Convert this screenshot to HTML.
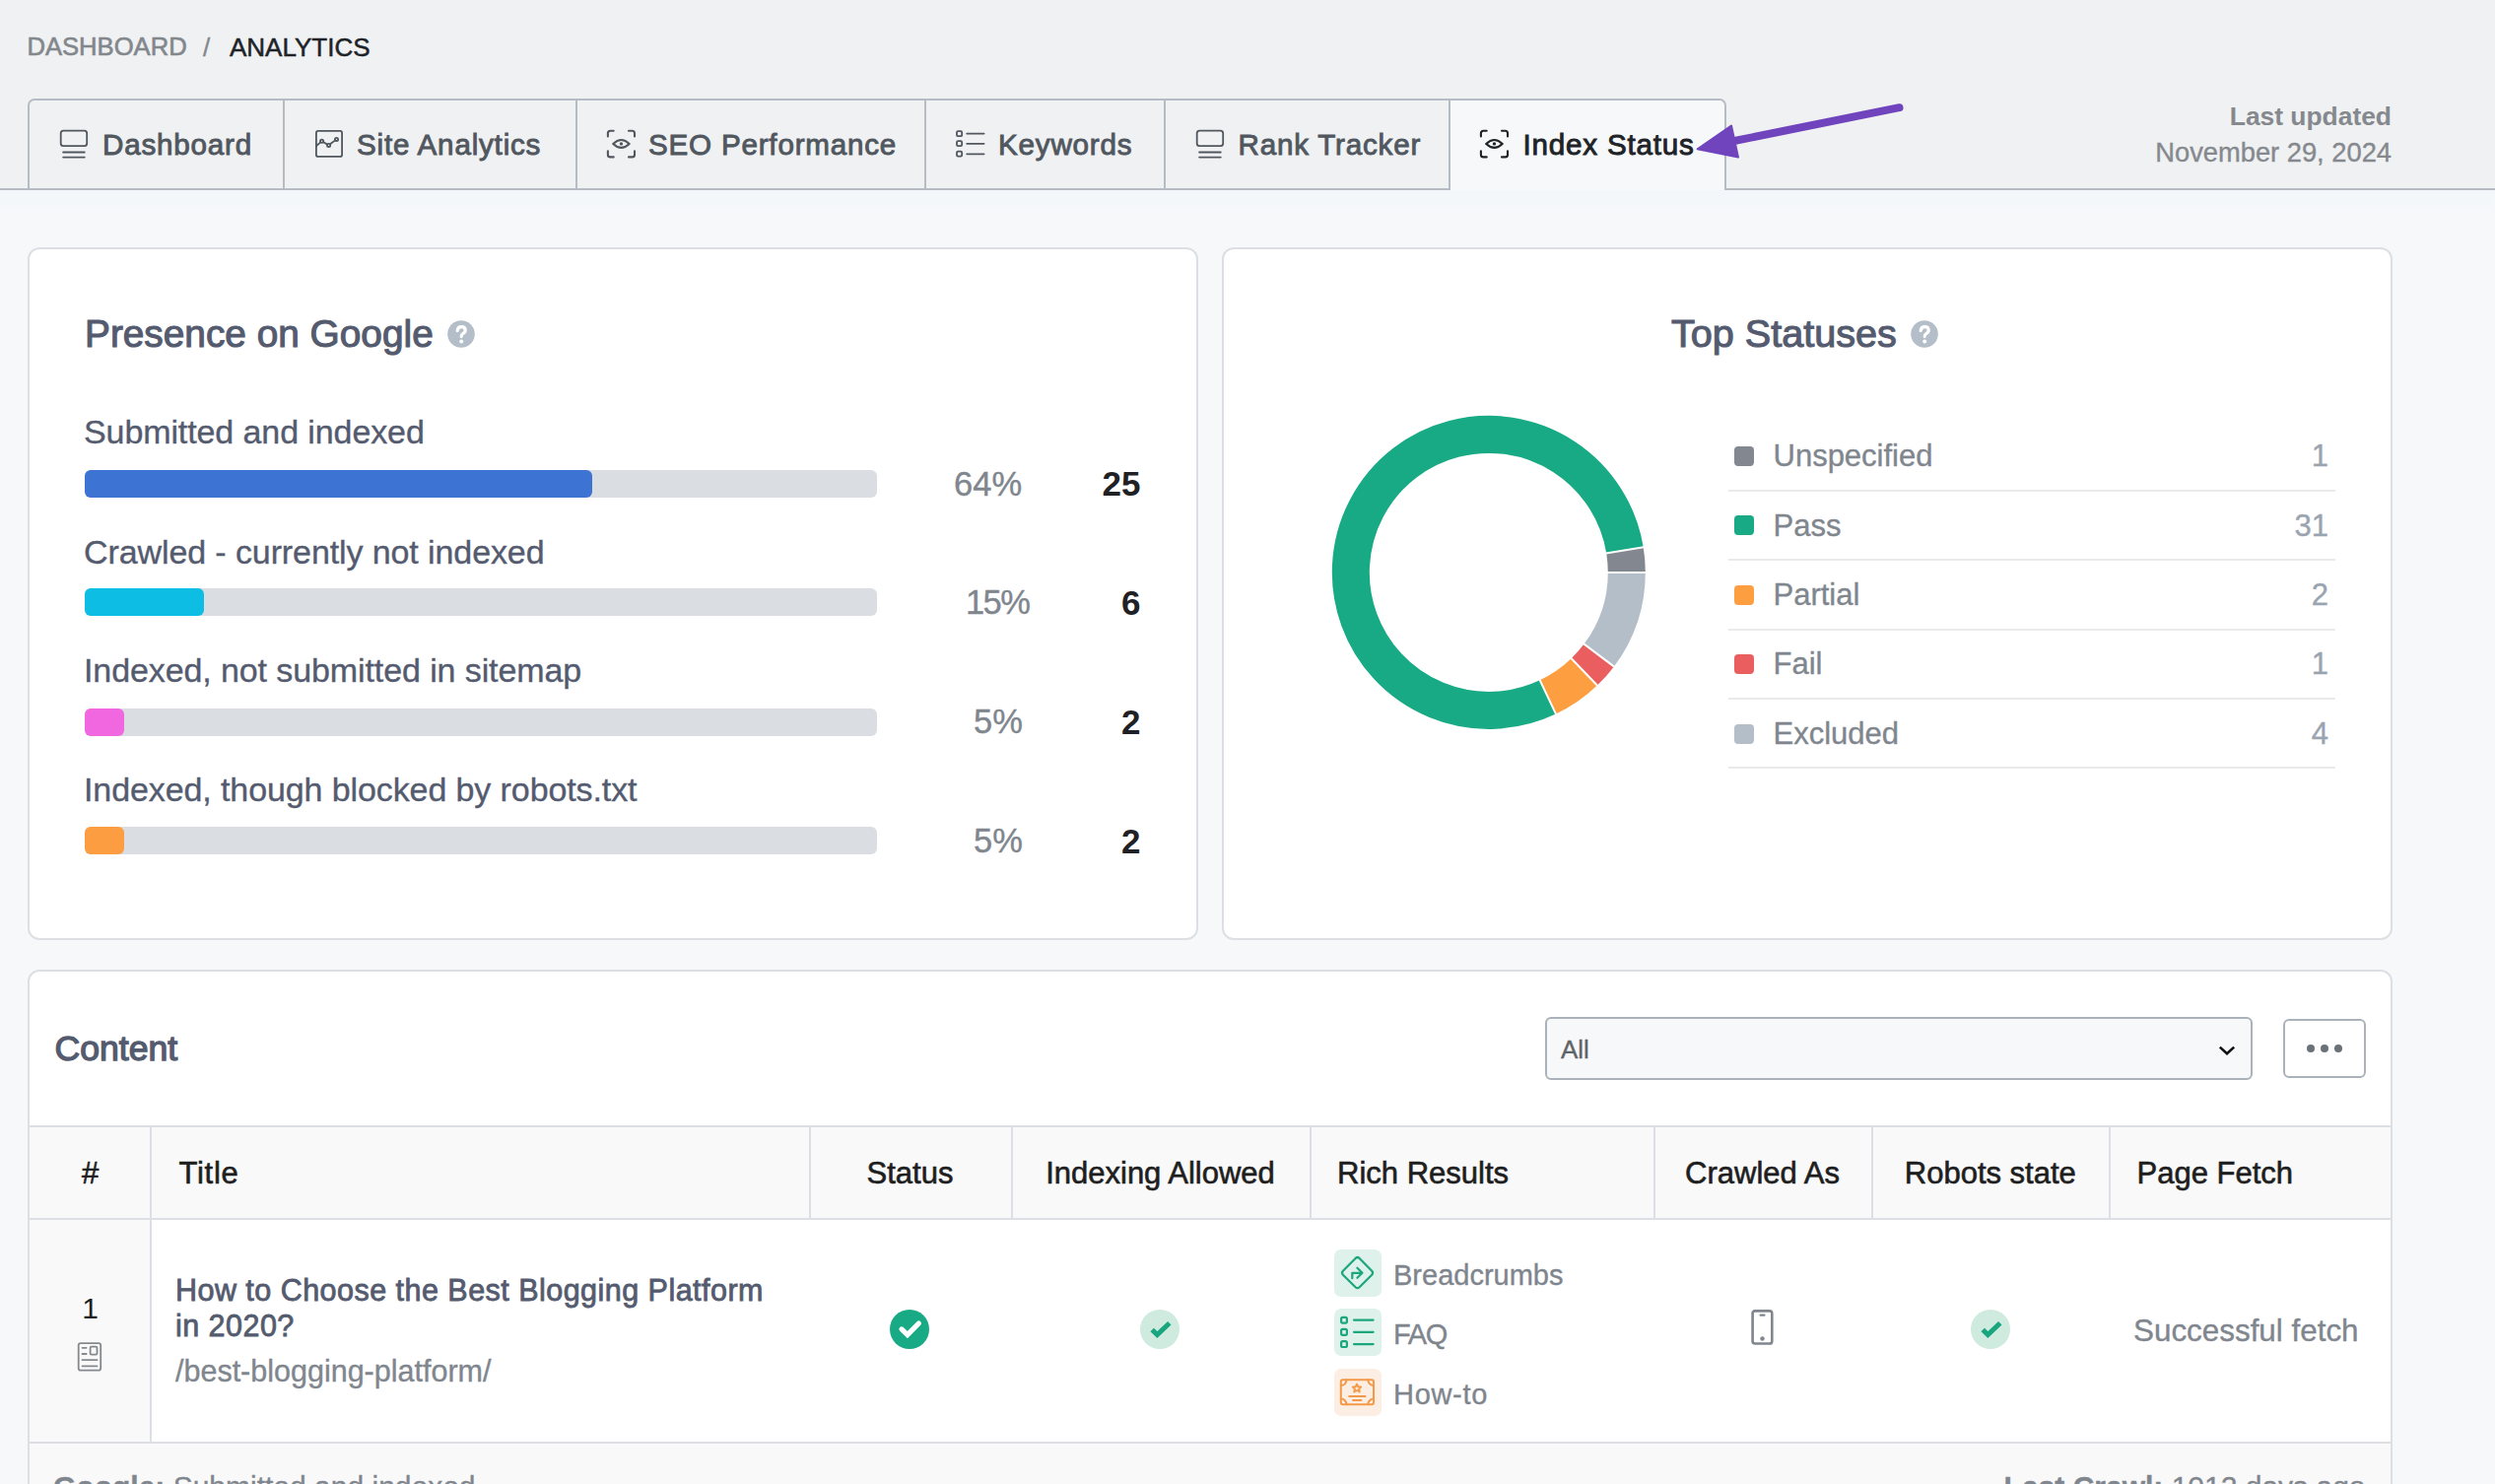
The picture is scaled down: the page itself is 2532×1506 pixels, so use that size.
<!DOCTYPE html>
<html><head><meta charset="utf-8"><title>Index Status</title>
<style>
html,body{margin:0;padding:0;width:2532px;height:1506px;overflow:hidden;background:#f7f8fa}
body{position:relative;font-family:"Liberation Sans",sans-serif}
.a{position:absolute;display:block}
.t{position:absolute;white-space:pre;font-family:"Liberation Sans",sans-serif}
</style></head><body>
<div class="a" style="left:0px;top:0px;width:2532px;height:192px;background:#f0f1f3"></div>
<div class="a" style="left:0px;top:192px;width:2532px;height:1314px;background:#f7f8fa"></div>
<div class="a" style="left:0px;top:193px;width:2532px;height:36px;background:linear-gradient(#f3f7fa,#f7f8fa)"></div>
<div class="t" style="left:27.5px;top:35.3px;font-size:25.6px;line-height:25.6px;font-weight:400;color:#82878c;-webkit-text-stroke:0.6px #82878c;">DASHBOARD</div>
<div class="t" style="left:206.0px;top:35.0px;font-size:26px;line-height:26px;font-weight:400;color:#82878c;-webkit-text-stroke:0.35px #82878c;">/</div>
<div class="t" style="left:233.0px;top:35.0px;font-size:26px;line-height:26px;font-weight:400;color:#1d2327;-webkit-text-stroke:0.5px #1d2327;">ANALYTICS</div>
<div class="a" style="left:1472px;top:102px;width:279px;height:91px;background:#f7f8fa"></div>
<div class="a" style="left:28px;top:100px;width:1724px;height:93px;box-sizing:border-box;border:2px solid #b5bcc3;border-bottom:none;border-radius:7px 7px 0 0"></div>
<div class="a" style="left:287px;top:101px;width:2px;height:92px;background:#b5bcc3"></div>
<div class="a" style="left:584px;top:101px;width:2px;height:92px;background:#b5bcc3"></div>
<div class="a" style="left:938px;top:101px;width:2px;height:92px;background:#b5bcc3"></div>
<div class="a" style="left:1181px;top:101px;width:2px;height:92px;background:#b5bcc3"></div>
<div class="a" style="left:1470px;top:101px;width:2px;height:92px;background:#b5bcc3"></div>
<div class="a" style="left:0px;top:191px;width:1472px;height:2px;background:#b5bcc3"></div>
<div class="a" style="left:1751px;top:191px;width:781px;height:2px;background:#b5bcc3"></div>
<svg class="a" style="left:55px;top:125px;" width="40" height="40" viewBox="0 0 40 40"><rect x="6.7" y="7.6" width="26.5" height="15.6" rx="2.6" stroke="#50575e" stroke-width="1.8" fill="none" stroke-linecap="round" stroke-linejoin="round"/><path d="M9.1 29.5H30.8M9.1 34.6H30.8" stroke="#50575e" stroke-width="1.8" fill="none" stroke-linecap="round" stroke-linejoin="round"/></svg>
<div class="t" style="left:104.0px;top:131.5px;font-size:29.6px;line-height:29.6px;font-weight:400;color:#50575e;letter-spacing:0.8px;-webkit-text-stroke:0.9px #50575e;">Dashboard</div>
<svg class="a" style="left:315px;top:125px;" width="40" height="40" viewBox="0 0 40 40"><rect x="5.9" y="7.9" width="26.2" height="26" rx="2" stroke="#50575e" stroke-width="1.8" fill="none" stroke-linecap="round" stroke-linejoin="round"/><path d="M5.8 23.2L10 19.6M13.2 19.3L16.9 21.4M20.3 21L24.9 17.6" stroke="#50575e" stroke-width="1.8" fill="none" stroke-linecap="round" stroke-linejoin="round"/><circle cx="11.6" cy="18.3" r="1.6" stroke="#50575e" stroke-width="1.8" fill="none" stroke-linecap="round" stroke-linejoin="round"/><circle cx="18.6" cy="22.4" r="1.6" stroke="#50575e" stroke-width="1.8" fill="none" stroke-linecap="round" stroke-linejoin="round"/><circle cx="26.5" cy="16.4" r="1.6" stroke="#50575e" stroke-width="1.8" fill="none" stroke-linecap="round" stroke-linejoin="round"/></svg>
<div class="t" style="left:362.0px;top:131.5px;font-size:29.6px;line-height:29.6px;font-weight:400;color:#50575e;letter-spacing:0.8px;-webkit-text-stroke:0.9px #50575e;">Site Analytics</div>
<svg class="a" style="left:610px;top:125px;" width="40" height="40" viewBox="0 0 40 40"><path d="M6.9 13.5V10.3A2.5 2.5 0 0 1 9.4 7.8H12.7M28 7.8H31.5A2.5 2.5 0 0 1 34 10.3V13.5M6.9 28.3V31.9A2.5 2.5 0 0 0 9.4 34.4H12.7M28 34.4H31.5A2.5 2.5 0 0 0 34 31.9V28.3" stroke="#50575e" stroke-width="2.1" fill="none" stroke-linecap="round" stroke-linejoin="round"/><path d="M12.2 20.9Q20.45 13.1 28.7 20.9Q20.45 28.7 12.2 20.9Z" stroke="#50575e" stroke-width="2.1" fill="none" stroke-linecap="round" stroke-linejoin="round"/><circle cx="20.45" cy="20.9" r="1.7" fill="#50575e"/></svg>
<div class="t" style="left:658.0px;top:131.5px;font-size:29.6px;line-height:29.6px;font-weight:400;color:#50575e;letter-spacing:0.8px;-webkit-text-stroke:0.9px #50575e;">SEO Performance</div>
<svg class="a" style="left:965px;top:125px;" width="40" height="40" viewBox="0 0 40 40"><rect x="6" y="8.2" width="5.2" height="5" rx="1.3" stroke="#50575e" stroke-width="1.8" fill="none" stroke-linecap="round" stroke-linejoin="round"/><rect x="6" y="18.1" width="5.2" height="5" rx="1.3" stroke="#50575e" stroke-width="1.8" fill="none" stroke-linecap="round" stroke-linejoin="round"/><rect x="6" y="28.6" width="5.2" height="5" rx="1.3" stroke="#50575e" stroke-width="1.8" fill="none" stroke-linecap="round" stroke-linejoin="round"/><path d="M16.2 10.6H33.6M16.2 20.8H33.6M16.2 31.3H33.6" stroke="#50575e" stroke-width="1.8" fill="none" stroke-linecap="round" stroke-linejoin="round"/></svg>
<div class="t" style="left:1013.0px;top:131.5px;font-size:29.6px;line-height:29.6px;font-weight:400;color:#50575e;letter-spacing:0.8px;-webkit-text-stroke:0.9px #50575e;">Keywords</div>
<svg class="a" style="left:1208px;top:125px;" width="40" height="40" viewBox="0 0 40 40"><rect x="6.7" y="7.6" width="26.5" height="15.6" rx="2.6" stroke="#50575e" stroke-width="1.8" fill="none" stroke-linecap="round" stroke-linejoin="round"/><path d="M9.1 29.5H30.8M9.1 34.6H30.8" stroke="#50575e" stroke-width="1.8" fill="none" stroke-linecap="round" stroke-linejoin="round"/></svg>
<div class="t" style="left:1256.5px;top:131.5px;font-size:29.6px;line-height:29.6px;font-weight:400;color:#50575e;letter-spacing:0.8px;-webkit-text-stroke:0.9px #50575e;">Rank Tracker</div>
<svg class="a" style="left:1496px;top:125px;" width="40" height="40" viewBox="0 0 40 40"><path d="M6.9 13.5V10.3A2.5 2.5 0 0 1 9.4 7.8H12.7M28 7.8H31.5A2.5 2.5 0 0 1 34 10.3V13.5M6.9 28.3V31.9A2.5 2.5 0 0 0 9.4 34.4H12.7M28 34.4H31.5A2.5 2.5 0 0 0 34 31.9V28.3" stroke="#1d2327" stroke-width="2.1" fill="none" stroke-linecap="round" stroke-linejoin="round"/><path d="M12.2 20.9Q20.45 13.1 28.7 20.9Q20.45 28.7 12.2 20.9Z" stroke="#1d2327" stroke-width="2.1" fill="none" stroke-linecap="round" stroke-linejoin="round"/><circle cx="20.45" cy="20.9" r="1.7" fill="#1d2327"/></svg>
<div class="t" style="left:1545.5px;top:131.5px;font-size:29.6px;line-height:29.6px;font-weight:400;color:#1d2327;letter-spacing:0.8px;-webkit-text-stroke:0.9px #1d2327;">Index Status</div>
<svg class="a" style="left:1700px;top:95px;" width="240" height="80" viewBox="0 0 240 80"><path d="M227.5 14.2L55 49" stroke="#6f44bd" stroke-width="8" stroke-linecap="round"/><path d="M22.6 56.2L57 32.5L64 64.6Z" fill="#6f44bd" stroke="#6f44bd" stroke-width="2" stroke-linejoin="round"/></svg>
<div class="t" style="right:105.0px;top:105.4px;font-size:26.4px;line-height:26.4px;font-weight:700;color:#85898e;text-align:right;">Last updated</div>
<div class="t" style="right:105.0px;top:140.7px;font-size:27.3px;line-height:27.3px;font-weight:400;color:#85898e;text-align:right;-webkit-text-stroke:0.35px #85898e;">November 29, 2024</div>
<div class="a" style="left:28px;top:251px;width:1188px;height:703px;box-sizing:border-box;border:2px solid #dcdfe3;border-radius:12px;background:#fff"></div>
<div class="a" style="left:1240px;top:251px;width:1188px;height:703px;box-sizing:border-box;border:2px solid #dcdfe3;border-radius:12px;background:#fff"></div>
<div class="a" style="left:28px;top:984px;width:2400px;height:700px;box-sizing:border-box;border:2px solid #dcdfe3;border-radius:12px;background:#fff"></div>
<div class="t" style="left:86.0px;top:320.2px;font-size:38.8px;line-height:38.8px;font-weight:400;color:#545b6f;-webkit-text-stroke:1.1px #545b6f;">Presence on Google</div>
<svg class="a" style="left:454px;top:325px;" width="28" height="28" viewBox="0 0 28 28"><circle cx="14" cy="14" r="13.8" fill="#b4bec9"/><path d="M10.2 10.6Q10.6 6.6 14.3 6.6Q18.2 6.6 18.2 10.2Q18.2 12.3 15.8 13.6Q14.2 14.5 14.2 16.6" stroke="#fff" stroke-width="3.2" fill="none" stroke-linecap="round"/><circle cx="14.2" cy="21.4" r="2" fill="#fff"/></svg>
<div class="t" style="left:1696.0px;top:319.2px;font-size:39.6px;line-height:39.6px;font-weight:400;color:#545b6f;-webkit-text-stroke:1.1px #545b6f;">Top Statuses</div>
<svg class="a" style="left:1938.5px;top:325.2px;" width="28" height="28" viewBox="0 0 28 28"><circle cx="14" cy="14" r="13.8" fill="#b4bec9"/><path d="M10.2 10.6Q10.6 6.6 14.3 6.6Q18.2 6.6 18.2 10.2Q18.2 12.3 15.8 13.6Q14.2 14.5 14.2 16.6" stroke="#fff" stroke-width="3.2" fill="none" stroke-linecap="round"/><circle cx="14.2" cy="21.4" r="2" fill="#fff"/></svg>
<div class="t" style="left:85.0px;top:421.2px;font-size:34px;line-height:34px;font-weight:400;color:#545b6f;letter-spacing:-0.1px;-webkit-text-stroke:0.35px #545b6f;">Submitted and indexed</div>
<div class="a" style="left:86px;top:477px;width:804px;height:28px;background:#dadee2;border-radius:6px"></div>
<div class="a" style="left:86px;top:477px;width:515px;height:28px;background:#3d74d4;border-radius:6px"></div>
<div class="t" style="left:968.1px;top:473.8px;font-size:34.5px;line-height:34.5px;font-weight:400;color:#80868e;-webkit-text-stroke:0.35px #80868e;">64%</div>
<div class="t" style="right:1374.5px;top:473.4px;font-size:35px;line-height:35px;font-weight:700;color:#1f2124;text-align:right;">25</div>
<div class="t" style="left:85.0px;top:542.6px;font-size:34px;line-height:34px;font-weight:400;color:#545b6f;letter-spacing:-0.1px;-webkit-text-stroke:0.35px #545b6f;">Crawled - currently not indexed</div>
<div class="a" style="left:86px;top:597.4px;width:804px;height:28px;background:#dadee2;border-radius:6px"></div>
<div class="a" style="left:86px;top:597.4px;width:120.7px;height:28px;background:#0ebde4;border-radius:6px"></div>
<div class="t" style="left:980.0px;top:594.2px;font-size:34.5px;line-height:34.5px;font-weight:400;color:#80868e;letter-spacing:-1.6px;-webkit-text-stroke:0.35px #80868e;">15%</div>
<div class="t" style="right:1374.5px;top:593.8px;font-size:35px;line-height:35px;font-weight:700;color:#1f2124;text-align:right;">6</div>
<div class="t" style="left:85.0px;top:662.7px;font-size:34px;line-height:34px;font-weight:400;color:#545b6f;letter-spacing:-0.1px;-webkit-text-stroke:0.35px #545b6f;">Indexed, not submitted in sitemap</div>
<div class="a" style="left:86px;top:718.5px;width:804px;height:28px;background:#dadee2;border-radius:6px"></div>
<div class="a" style="left:86px;top:718.5px;width:40px;height:28px;background:#f067e0;border-radius:6px"></div>
<div class="t" style="left:988.0px;top:715.3px;font-size:34.5px;line-height:34.5px;font-weight:400;color:#80868e;-webkit-text-stroke:0.35px #80868e;">5%</div>
<div class="t" style="right:1374.5px;top:714.9px;font-size:35px;line-height:35px;font-weight:700;color:#1f2124;text-align:right;">2</div>
<div class="t" style="left:85.0px;top:783.8px;font-size:34px;line-height:34px;font-weight:400;color:#545b6f;letter-spacing:-0.1px;-webkit-text-stroke:0.35px #545b6f;">Indexed, though blocked by robots.txt</div>
<div class="a" style="left:86px;top:839.3px;width:804px;height:28px;background:#dadee2;border-radius:6px"></div>
<div class="a" style="left:86px;top:839.3px;width:40px;height:28px;background:#fd9d41;border-radius:6px"></div>
<div class="t" style="left:988.0px;top:836.1px;font-size:34.5px;line-height:34.5px;font-weight:400;color:#80868e;-webkit-text-stroke:0.35px #80868e;">5%</div>
<div class="t" style="right:1374.5px;top:835.7px;font-size:35px;line-height:35px;font-weight:700;color:#1f2124;text-align:right;">2</div>
<svg class="a" style="left:1340px;top:410px;" width="350" height="350" viewBox="0 0 350 350"><path d="M308.99 148.44A140.0 140.0 0 0 1 310.80 170.90" stroke="#83878f" stroke-width="38" fill="none"/><path d="M310.80 170.90A140.0 140.0 0 0 1 282.72 255.00" stroke="#b4bec8" stroke-width="38" fill="none"/><path d="M282.72 255.00A140.0 140.0 0 0 1 267.78 271.87" stroke="#ea5e60" stroke-width="38" fill="none"/><path d="M267.78 271.87A140.0 140.0 0 0 1 230.82 297.38" stroke="#fd9f40" stroke-width="38" fill="none"/><path d="M230.82 297.38A140.0 140.0 0 1 1 308.99 148.44" stroke="#17aa84" stroke-width="38" fill="none"/><path d="M288.26 151.81L329.72 145.07" stroke="#fff" stroke-width="2"/><path d="M289.80 170.90L331.80 170.90" stroke="#fff" stroke-width="2"/><path d="M265.93 242.39L299.51 267.62" stroke="#fff" stroke-width="2"/><path d="M253.23 256.72L282.33 287.01" stroke="#fff" stroke-width="2"/><path d="M221.81 278.41L239.82 316.36" stroke="#fff" stroke-width="2"/></svg>
<div class="a" style="left:1760px;top:453px;width:20px;height:20px;background:#83878f;border-radius:4px"></div>
<div class="t" style="left:1799.5px;top:447.1px;font-size:31px;line-height:31px;font-weight:400;color:#80868e;-webkit-text-stroke:0.35px #80868e;">Unspecified</div>
<div class="t" style="right:169.0px;top:447.1px;font-size:31px;line-height:31px;font-weight:400;color:#9aa4b0;text-align:right;-webkit-text-stroke:0.35px #9aa4b0;">1</div>
<div class="a" style="left:1754px;top:497px;width:616px;height:2px;background:#e9eaec"></div>
<div class="a" style="left:1760px;top:523px;width:20px;height:20px;background:#17aa84;border-radius:4px"></div>
<div class="t" style="left:1799.5px;top:517.5px;font-size:31px;line-height:31px;font-weight:400;color:#80868e;-webkit-text-stroke:0.35px #80868e;">Pass</div>
<div class="t" style="right:169.0px;top:517.5px;font-size:31px;line-height:31px;font-weight:400;color:#9aa4b0;text-align:right;-webkit-text-stroke:0.35px #9aa4b0;">31</div>
<div class="a" style="left:1754px;top:567px;width:616px;height:2px;background:#e9eaec"></div>
<div class="a" style="left:1760px;top:594px;width:20px;height:20px;background:#fd9f40;border-radius:4px"></div>
<div class="t" style="left:1799.5px;top:587.9px;font-size:31px;line-height:31px;font-weight:400;color:#80868e;-webkit-text-stroke:0.35px #80868e;">Partial</div>
<div class="t" style="right:169.0px;top:587.9px;font-size:31px;line-height:31px;font-weight:400;color:#9aa4b0;text-align:right;-webkit-text-stroke:0.35px #9aa4b0;">2</div>
<div class="a" style="left:1754px;top:638px;width:616px;height:2px;background:#e9eaec"></div>
<div class="a" style="left:1760px;top:664px;width:20px;height:20px;background:#ea5e60;border-radius:4px"></div>
<div class="t" style="left:1799.5px;top:658.3px;font-size:31px;line-height:31px;font-weight:400;color:#80868e;-webkit-text-stroke:0.35px #80868e;">Fail</div>
<div class="t" style="right:169.0px;top:658.3px;font-size:31px;line-height:31px;font-weight:400;color:#9aa4b0;text-align:right;-webkit-text-stroke:0.35px #9aa4b0;">1</div>
<div class="a" style="left:1754px;top:708px;width:616px;height:2px;background:#e9eaec"></div>
<div class="a" style="left:1760px;top:735px;width:20px;height:20px;background:#b4bec8;border-radius:4px"></div>
<div class="t" style="left:1799.5px;top:728.7px;font-size:31px;line-height:31px;font-weight:400;color:#80868e;-webkit-text-stroke:0.35px #80868e;">Excluded</div>
<div class="t" style="right:169.0px;top:728.7px;font-size:31px;line-height:31px;font-weight:400;color:#9aa4b0;text-align:right;-webkit-text-stroke:0.35px #9aa4b0;">4</div>
<div class="a" style="left:1754px;top:778px;width:616px;height:2px;background:#e9eaec"></div>
<div class="t" style="left:55.5px;top:1046.9px;font-size:35.6px;line-height:35.6px;font-weight:400;color:#545b6f;-webkit-text-stroke:1.35px #545b6f;">Content</div>
<div class="a" style="left:1568px;top:1032px;width:718px;height:64px;box-sizing:border-box;border:2px solid #abb2ba;border-radius:6px;background:#f7f8f9"></div>
<div class="t" style="left:1584.0px;top:1052.0px;font-size:26px;line-height:26px;font-weight:400;color:#5f6467;-webkit-text-stroke:0.35px #5f6467;">All</div>
<svg class="a" style="left:2248px;top:1058px;" width="24" height="16" viewBox="0 0 24 16"><path d="M4.8 4.6L12 11.2L19.2 4.6" stroke="#111" stroke-width="2.6" fill="none"/></svg>
<div class="a" style="left:2317px;top:1034px;width:84px;height:60px;box-sizing:border-box;border:2px solid #abb2ba;border-radius:6px;background:#fff"></div>
<div class="a" style="left:2341px;top:1060px;width:8px;height:8px;background:#6b7079;border-radius:50%"></div>
<div class="a" style="left:2355px;top:1060px;width:8px;height:8px;background:#6b7079;border-radius:50%"></div>
<div class="a" style="left:2369px;top:1060px;width:8px;height:8px;background:#6b7079;border-radius:50%"></div>
<div class="a" style="left:30px;top:1142px;width:2396px;height:2px;background:#dcdfe3"></div>
<div class="a" style="left:30px;top:1144px;width:2396px;height:92px;background:#f9f9fa"></div>
<div class="a" style="left:30px;top:1236px;width:2396px;height:2px;background:#dcdfe3"></div>
<div class="a" style="left:30px;top:1238px;width:122px;height:225px;background:#f9f9fa"></div>
<div class="a" style="left:30px;top:1463px;width:2396px;height:2px;background:#dcdfe3"></div>
<div class="a" style="left:30px;top:1465px;width:2396px;height:60px;background:#f9f9fa"></div>
<div class="a" style="left:821px;top:1144px;width:2px;height:92px;background:#dcdfe3"></div>
<div class="a" style="left:1026px;top:1144px;width:2px;height:92px;background:#dcdfe3"></div>
<div class="a" style="left:1329px;top:1144px;width:2px;height:92px;background:#dcdfe3"></div>
<div class="a" style="left:1678px;top:1144px;width:2px;height:92px;background:#dcdfe3"></div>
<div class="a" style="left:1899px;top:1144px;width:2px;height:92px;background:#dcdfe3"></div>
<div class="a" style="left:2140px;top:1144px;width:2px;height:92px;background:#dcdfe3"></div>
<div class="a" style="left:152px;top:1144px;width:2px;height:319px;background:#dcdfe3"></div>
<div class="t" style="left:-108.5px;width:400px;text-align:center;top:1174.8px;font-size:31px;line-height:31px;font-weight:400;color:#1e1e1e;-webkit-text-stroke:0.6px #1e1e1e;">#</div>
<div class="t" style="left:181.5px;top:1174.8px;font-size:31px;line-height:31px;font-weight:400;color:#1e1e1e;letter-spacing:0.7px;-webkit-text-stroke:0.6px #1e1e1e;">Title</div>
<div class="t" style="left:723.5px;width:400px;text-align:center;top:1174.8px;font-size:31px;line-height:31px;font-weight:400;color:#1e1e1e;-webkit-text-stroke:0.6px #1e1e1e;">Status</div>
<div class="t" style="left:977.5px;width:400px;text-align:center;top:1174.8px;font-size:31px;line-height:31px;font-weight:400;color:#1e1e1e;-webkit-text-stroke:0.6px #1e1e1e;">Indexing Allowed</div>
<div class="t" style="left:1357.0px;top:1174.8px;font-size:31px;line-height:31px;font-weight:400;color:#1e1e1e;-webkit-text-stroke:0.6px #1e1e1e;">Rich Results</div>
<div class="t" style="left:1588.5px;width:400px;text-align:center;top:1174.8px;font-size:31px;line-height:31px;font-weight:400;color:#1e1e1e;-webkit-text-stroke:0.6px #1e1e1e;">Crawled As</div>
<div class="t" style="left:1819.8px;width:400px;text-align:center;top:1174.8px;font-size:31px;line-height:31px;font-weight:400;color:#1e1e1e;-webkit-text-stroke:0.6px #1e1e1e;">Robots state</div>
<div class="t" style="left:2168.5px;top:1174.8px;font-size:31px;line-height:31px;font-weight:400;color:#1e1e1e;-webkit-text-stroke:0.6px #1e1e1e;">Page Fetch</div>
<div class="t" style="left:61.5px;width:60px;text-align:center;top:1313.3px;font-size:30px;line-height:30px;color:#1e1e1e">1</div>
<svg class="a" style="left:72px;top:1355px;" width="40" height="40" viewBox="0 0 40 40"><rect x="7.7" y="8.1" width="22.5" height="27.6" rx="2.2" stroke="#85898e" stroke-width="1.8" fill="none" stroke-linecap="round" stroke-linejoin="round"/><path d="M11.5 12.8H15.6M11.5 19H15.6M11.5 25.2H26.5M11.5 31.4H26.5" stroke="#85898e" stroke-width="1.8" fill="none" stroke-linecap="round" stroke-linejoin="round"/><rect x="19.6" y="11.7" width="6.9" height="7.9" rx="1.2" stroke="#85898e" stroke-width="1.8" fill="none" stroke-linecap="round" stroke-linejoin="round"/></svg>
<div class="t" style="left:178.0px;top:1294.4px;font-size:30.5px;line-height:30.5px;font-weight:400;color:#545b6f;letter-spacing:0.47px;-webkit-text-stroke:0.8px #545b6f;">How to Choose the Best Blogging Platform</div>
<div class="t" style="left:178.0px;top:1329.9px;font-size:30.5px;line-height:30.5px;font-weight:400;color:#545b6f;letter-spacing:0.47px;-webkit-text-stroke:0.8px #545b6f;">in 2020?</div>
<div class="t" style="left:178.0px;top:1376.2px;font-size:30.5px;line-height:30.5px;font-weight:400;color:#80868e;-webkit-text-stroke:0.35px #80868e;">/best-blogging-platform/</div>
<svg class="a" style="left:902px;top:1329px;" width="42" height="42" viewBox="0 0 42 42"><circle cx="21" cy="20" r="20" fill="#17aa84"/><path d="M13 19.9L18.9 25.6L30.4 14" stroke="#fff" stroke-width="5.2" fill="none" stroke-linecap="round"/></svg>
<svg class="a" style="left:1157px;top:1329px;" width="42" height="42" viewBox="0 0 42 42"><circle cx="20" cy="20" r="20" fill="#cfeadf"/><path d="M12.2 20.4L17.4 25.6L29.8 13.8" stroke="#17a67d" stroke-width="5" fill="none"/></svg>
<svg class="a" style="left:2000px;top:1328.5px;" width="42" height="42" viewBox="0 0 42 42"><circle cx="20" cy="20" r="20" fill="#cfeadf"/><path d="M12.2 20.4L17.4 25.6L29.8 13.8" stroke="#17a67d" stroke-width="5" fill="none"/></svg>
<div class="a" style="left:1354px;top:1268px;width:48px;height:48px;background:#def2eb;border-radius:7px"></div>
<div class="a" style="left:1354px;top:1328px;width:48px;height:48px;background:#def2eb;border-radius:7px"></div>
<div class="a" style="left:1354px;top:1389px;width:48px;height:48px;background:#fdeee3;border-radius:7px"></div>
<svg class="a" style="left:1352px;top:1266px;" width="52" height="52" viewBox="0 0 52 52"><path d="M23.6 10.9Q25.6 9.1 27.6 10.9L40.2 23.8Q42 25.8 40.2 27.8L27.6 40.2Q25.6 42 23.6 40.2L10.9 27.8Q9.1 25.8 10.9 23.8Z" stroke="#1ba67c" stroke-width="2.2" fill="none" stroke-linecap="round" stroke-linejoin="round"/><path d="M20.3 31.2V25.8H30.5M25.4 20.7L30.5 25.8L25.4 30.8" stroke="#1ba67c" stroke-width="2.2" fill="none" stroke-linecap="round" stroke-linejoin="round"/></svg>
<svg class="a" style="left:1352px;top:1326px;" width="52" height="52" viewBox="0 0 52 52"><rect x="9.1" y="10.8" width="5.8" height="5.9" rx="1.6" stroke="#1ba67c" stroke-width="2.2" fill="none" stroke-linecap="round" stroke-linejoin="round"/><rect x="9.1" y="22.9" width="5.8" height="5.9" rx="1.6" stroke="#1ba67c" stroke-width="2.2" fill="none" stroke-linecap="round" stroke-linejoin="round"/><rect x="9.1" y="35.1" width="5.8" height="5.9" rx="1.6" stroke="#1ba67c" stroke-width="2.2" fill="none" stroke-linecap="round" stroke-linejoin="round"/><path d="M22 13.6H41.6M22 25.8H41.6M22 38.1H41.6" stroke="#1ba67c" stroke-width="2.2" fill="none" stroke-linecap="round" stroke-linejoin="round"/></svg>
<svg class="a" style="left:1352px;top:1387px;" width="52" height="52" viewBox="0 0 52 52"><rect x="8.8" y="13.3" width="33.2" height="24.9" rx="2" stroke="#f39a4a" stroke-width="2" fill="none" stroke-linecap="round" stroke-linejoin="round"/><path d="M8.8 19A5.5 5.5 0 0 0 14.4 13.3M36.4 13.3A5.5 5.5 0 0 0 42 19M8.8 32.6A5.5 5.5 0 0 1 14.4 38.2M36.4 38.2A5.5 5.5 0 0 1 42 32.6M17.2 30.1H33.6M21 34H29.4" stroke="#f39a4a" stroke-width="2" fill="none" stroke-linecap="round" stroke-linejoin="round"/><path d="M25 17.6L26.3 20.3L29.2 20.6L27.1 22.6L27.7 25.5L25 24L22.3 25.5L22.9 22.6L20.8 20.6L23.7 20.3Z" stroke="#f39a4a" stroke-width="2" fill="none" stroke-linecap="round" stroke-linejoin="round"/></svg>
<div class="t" style="left:1414.0px;top:1280.0px;font-size:29px;line-height:29px;font-weight:400;color:#7f858d;-webkit-text-stroke:0.35px #7f858d;">Breadcrumbs</div>
<div class="t" style="left:1414.0px;top:1339.5px;font-size:29px;line-height:29px;font-weight:400;color:#7f858d;letter-spacing:-1.4px;-webkit-text-stroke:0.35px #7f858d;">FAQ</div>
<div class="t" style="left:1414.0px;top:1400.5px;font-size:29px;line-height:29px;font-weight:400;color:#7f858d;letter-spacing:0.7px;-webkit-text-stroke:0.35px #7f858d;">How-to</div>
<svg class="a" style="left:1768px;top:1325px;" width="40" height="45" viewBox="0 0 40 45"><rect x="10.6" y="5.4" width="19.7" height="33.1" rx="2.6" stroke="#80868e" stroke-width="2.6" fill="none"/><path d="M18.6 9.7H22.5" stroke="#80868e" stroke-width="2.2" stroke-linecap="round"/><circle cx="20.5" cy="33.5" r="2.2" fill="#80868e"/></svg>
<div class="t" style="left:2165.0px;top:1334.7px;font-size:31.4px;line-height:31.4px;font-weight:400;color:#80868e;-webkit-text-stroke:0.35px #80868e;">Successful fetch</div>
<div class="t" style="left:54.0px;top:1493.6px;font-size:30px;line-height:30px;font-weight:400;color:#80868e;-webkit-text-stroke:0.35px #80868e;"><b>Google:</b> Submitted and indexed</div>
<div class="t" style="right:131.5px;top:1493.6px;font-size:30px;line-height:30px;font-weight:400;color:#80868e;text-align:right;-webkit-text-stroke:0.35px #80868e;"><b>Last Crawl:</b> 1012 days ago</div>
</body></html>
